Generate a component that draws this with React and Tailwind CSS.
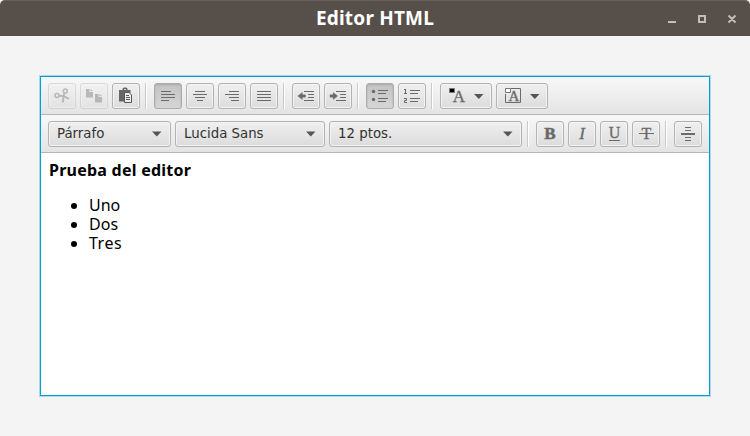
import React from "react";

const INK = "#6a6a6a";

function ToolButton({ active, disabled, wide, label, children }) {
  const face = active
    ? "bg-gradient-to-b from-[#c3c3c3] to-[#d6d6d6] border-[#adadad] shadow-[inset_0_1px_2px_#a8a8a8]"
    : "bg-gradient-to-b from-[#f0f0f0] to-[#dcdcdc] border-[#b3b3b3] shadow-[inset_0_0_0_1px_#f3f3f3]";
  return (
    <button
      aria-label={label}
      className={`flex h-[26px] shrink-0 items-center rounded-[3px] border ${wide ? "w-[52px]" : "w-7"} ${face} ${disabled ? "opacity-40" : ""}`}
    >
      <svg className="-m-px block shrink-0" width={wide ? 52 : 28} height="26" fill="none" stroke={INK}>
        {children}
      </svg>
    </button>
  );
}

function Separator() {
  return (
    <div className="flex h-[26px] w-1.5 shrink-0 pl-px">
      <div className="w-px bg-[#cacaca]" />
      <div className="w-px bg-white" />
    </div>
  );
}

function Select({ width, children }) {
  return (
    <div
      className={`flex h-[26px] shrink-0 items-center justify-between rounded-[3px] border border-[#b3b3b3] bg-gradient-to-b from-[#f0f0f0] to-[#dcdcdc] pl-2 pr-2 text-[13.33px] text-[#333] shadow-[inset_0_0_0_1px_#f3f3f3] ${width}`}
    >
      <span className="pt-px">{children}</span>
      <svg width="10" height="6" fill="#555">
        <path d="M0 0.5H9.5L4.8 5.6Z" />
      </svg>
    </div>
  );
}

const Letter = ({ x = 14, y = 17, size = 17, ...rest }) => (
  <text x={x} y={y} fontSize={size} fill={INK} stroke={INK} strokeWidth="0.3" textAnchor="middle" fontFamily="Liberation Serif, serif" {...rest} />
);

const Caret = () => <path d="M34 11H43.5L38.8 16Z" fill="#555" stroke="none" />;

export default function App() {
  return (
    <div className="h-[436px] w-[750px] overflow-hidden bg-[#f4f4f4] font-['DejaVu_Sans',sans-serif]">
      <header className="grid h-9 grid-cols-[1fr_auto_1fr] items-center rounded-t-[5px] border-t border-[#69625c] bg-[#574f4a]">
        <span />
        <h1 className="font-['Noto_Sans',sans-serif] text-[19px] font-bold leading-none tracking-[0.2px] text-white">Editor HTML</h1>
        <svg className="justify-self-end" width="90" height="34" fill="none" stroke="#c2bebb" strokeWidth="2">
          <path d="M8 20H16M39 14H45V20H39ZM68.5 13.5L75.5 20.5M75.5 13.5L68.5 20.5" />
        </svg>
      </header>

      <main className="px-10 pt-10">
        <section className="h-80 w-[670px] border border-[#039ed3] bg-white shadow-[0_0_0_1px_#a9d9ea]">
          <div className="flex h-[38px] items-center gap-1 border-b border-[#b5b5b5] bg-gradient-to-b from-[#f8f8f8] to-[#e4e4e4] pl-[7px]">
            <ToolButton disabled label="Cortar">
              <circle cx="9" cy="12.5" r="2" strokeWidth="1.6" />
              <circle cx="17.3" cy="8" r="2" strokeWidth="1.6" />
              <path d="M11 12.7L15.5 13L21 16M16.6 10L15.5 13L15 19.5" strokeWidth="1.9" />
            </ToolButton>
            <ToolButton disabled label="Copiar">
              <path d="M6 6H9.5V9H13V14.5H6ZM10.5 6L13 8H10.5ZM15 11H18.5V14H22V19.5H15ZM19.5 11L22 13H19.5Z" fill={INK} stroke="none" />
            </ToolButton>
            <ToolButton label="Pegar">
              <path d="M7 7H10.5V5.5L12 4.5H14L15.5 5.5V7H18.5V10H12V18.5H7Z" fill="#666" stroke="none" />
              <path d="M12.5 9.5H17L19.5 12V19.5H12.5Z" fill="#eee" stroke="#555" />
              <path d="M14 12.5H17M14 14.5H18M14 16.5H18" stroke="#555" />
              <path d="M12 6.5H14" stroke="#ccc" />
            </ToolButton>
            <Separator />
            <ToolButton active label="Izquierda"><path d="M7 8.5H17M7 11.5H21M7 14.5H21M7 17.5H15" /></ToolButton>
            <ToolButton label="Centro"><path d="M9 8.5H19M7 11.5H21M9 14.5H19M11 17.5H17" /></ToolButton>
            <ToolButton label="Derecha"><path d="M11 8.5H21M7 11.5H21M11 14.5H21M13 17.5H21" /></ToolButton>
            <ToolButton label="Justificar"><path d="M7 8.5H21M7 11.5H21M7 14.5H21M7 17.5H21" /></ToolButton>
            <Separator />
            <ToolButton label="Reducir sangría">
              <path d="M12 8.5H22M16 11.5H22M16 14.5H22M12 17.5H22" />
              <path d="M5.8 13L10.3 9.5V11.8H13.5V14.2H10.3V16.5Z" fill={INK} stroke={INK} strokeWidth="0.4" />
            </ToolButton>
            <ToolButton label="Aumentar sangría">
              <path d="M12 8.5H22M16 11.5H22M16 14.5H22M12 17.5H22" />
              <path d="M13.7 13L9.2 9.5V11.8H6V14.2H9.2V16.5Z" fill={INK} stroke={INK} strokeWidth="0.4" />
            </ToolButton>
            <Separator />
            <ToolButton active label="Viñetas">
              <path d="M12 7.5H22M12 10.5H20M12 15.5H22M12 18.5H20" />
              <circle cx="7.5" cy="8.5" r="1.7" fill={INK} stroke="none" />
              <circle cx="7.5" cy="16.5" r="1.7" fill={INK} stroke="none" />
            </ToolButton>
            <ToolButton label="Numeración">
              <path d="M12 7.5H22M12 10.5H20M12 15.5H22M12 18.5H20M6 6.5H8M7.5 6V10M6 10.5H9M6 15.5H8.5V17.5H6.5V19.5H9" />
            </ToolButton>
            <Separator />
            <ToolButton wide label="Color de texto">
              <Letter x={18.8} y={19} size={17}>A</Letter>
              <path d="M9.5 5.5H14.5V9.5H9.5Z" fill="#000" stroke="#777" />
              <Caret />
            </ToolButton>
            <ToolButton wide label="Color de fondo">
              <path d="M15 5.5H24.5V19.5H9.5V11" />
              <Letter x={18} y={18} size={15}>A</Letter>
              <path d="M9.5 5.5H14.5V9.5H9.5Z" fill="#fff" stroke="#777" />
              <Caret />
            </ToolButton>
          </div>

          <div className="flex h-[38px] items-center gap-1 border-b border-[#b5b5b5] bg-gradient-to-b from-[#f8f8f8] to-[#e4e4e4] pl-[7px]">
            <Select width="w-[123px]">Párrafo</Select>
            <Select width="w-[150px]">Lucida Sans</Select>
            <Select width="w-[193px]">12 ptos.</Select>
            <Separator />
            <ToolButton label="Negrita"><Letter y={18} fontWeight="bold" strokeWidth="0.5">B</Letter></ToolButton>
            <ToolButton label="Cursiva"><Letter y={18} fontStyle="italic">I</Letter></ToolButton>
            <ToolButton label="Subrayado">
              <Letter x={14.5} y={17} size={16}>U</Letter>
              <path d="M9 19.5H20" />
            </ToolButton>
            <ToolButton label="Tachado">
              <Letter x={14.5} y={18} size={16}>T</Letter>
              <path d="M7 12.5H22" />
            </ToolButton>
            <Separator />
            <ToolButton label="Regla horizontal">
              <path d="M11 6.5H17M11 9.5H17M11 16.5H17M11 19.5H17" />
              <path d="M7 13H21" strokeWidth="2" />
            </ToolButton>
          </div>

          <article className="px-2 pt-2 font-['Noto_Sans',sans-serif] text-[16px] leading-[19px] text-black">
            <p className="font-bold tracking-[0.24px]">Prueba del editor</p>
            <ul className="mt-4 list-disc pl-10">
              <li>Uno</li>
              <li className="tracking-[0.1px]">Dos</li>
              <li className="tracking-[0.5px]">Tres</li>
            </ul>
          </article>
        </section>
      </main>
    </div>
  );
}
